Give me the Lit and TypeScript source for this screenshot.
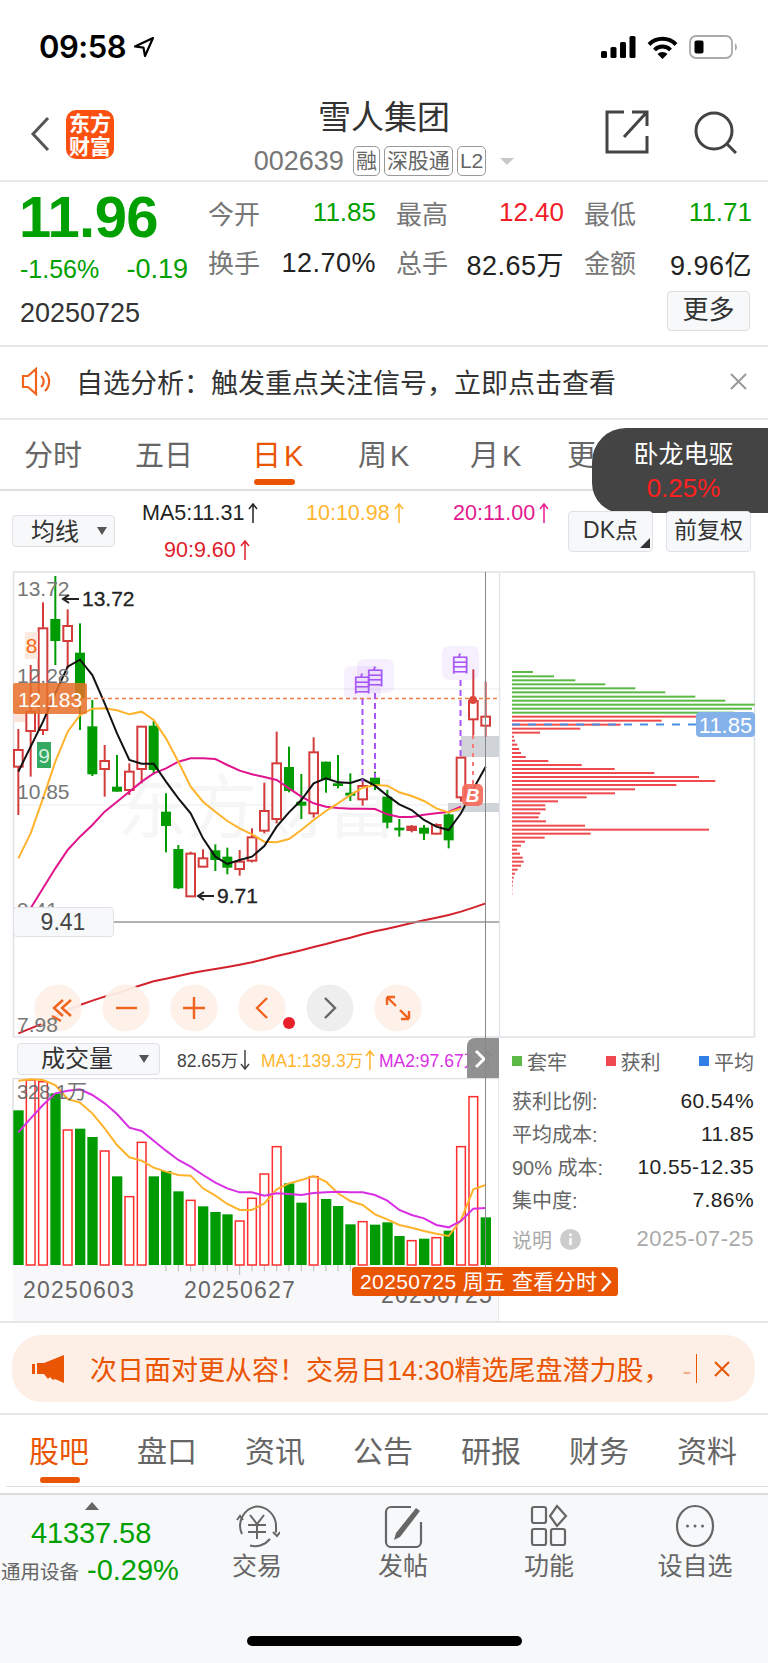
import { LitElement, html, css, svg } from 'lit';
import { customElement } from 'lit/decorators.js';

// x centres of the 39 candles, in 3x chart units
const xs = [55, 92, 129, 166, 203, 240, 277, 314, 351, 388, 425, 461, 498, 535, 572, 609, 646, 682, 719, 756, 793, 830, 867, 904, 941, 978, 1014, 1051, 1088, 1125, 1162, 1198, 1235, 1272, 1309, 1346, 1383, 1420, 1457];

// up, high, low, body top, body bottom
const candles: [number, number, number, number, number][] = [
  [1, 492, 750, 555, 605], [1, 300, 635, 440, 498], [1, 112, 510, 190, 495], [0, 33, 300, 162, 228],
  [1, 133, 310, 183, 228], [0, 175, 495, 263, 400], [0, 405, 633, 484, 628], [1, 540, 695, 588, 612],
  [0, 570, 680, 665, 680], [1, 595, 690, 620, 675], [1, 484, 655, 485, 612], [0, 468, 628, 482, 615],
  [0, 685, 862, 740, 783], [0, 840, 972, 852, 970], [1, 860, 995, 866, 994], [1, 853, 907, 880, 905],
  [0, 838, 918, 856, 885], [0, 848, 928, 875, 908], [1, 855, 932, 890, 912], [1, 790, 892, 817, 887],
  [1, 653, 805, 738, 797], [1, 500, 775, 595, 762], [0, 545, 682, 606, 678], [0, 627, 762, 710, 722],
  [1, 517, 758, 562, 745], [0, 590, 683, 590, 645], [0, 570, 670, 655, 663], [0, 625, 708, 683, 692],
  [1, 645, 722, 663, 703], [0, 620, 675, 638, 660], [0, 675, 790, 695, 773], [0, 762, 815, 788, 796],
  [1, 780, 802, 785, 795], [0, 780, 825, 788, 806], [1, 775, 808, 780, 806], [0, 745, 850, 748, 826],
  [1, 575, 710, 578, 697], [1, 313, 510, 408, 463], [1, 350, 515, 455, 482],
];

const ma5 = [620, 545, 470, 385, 305, 284, 330, 415, 505, 585, 596, 596, 650, 700, 745, 820, 875, 897, 885, 875, 843, 785, 742, 705, 655, 640, 652, 654, 642, 662, 692, 718, 735, 765, 785, 795, 745, 672, 605];
const ma10 = [880, 805, 700, 590, 500, 450, 431, 430, 436, 448, 440, 465, 520, 590, 665, 710, 740, 768, 790, 808, 830, 832, 822, 795, 765, 738, 715, 690, 668, 660, 662, 682, 693, 708, 730, 742, 730];
const ma20 = [1030, 970, 910, 855, 815, 780, 740, 710, 680, 650, 625, 610, 590, 580, 580, 582, 600, 617, 628, 636, 645, 670, 695, 715, 725, 729, 731, 731, 732, 748, 756, 756, 749, 745, 741, 725];
const ma90 = [1405, 1390, 1375, 1355, 1335, 1320, 1307, 1295, 1285, 1272, 1260, 1249, 1241, 1233, 1225, 1218, 1212, 1206, 1199, 1192, 1183, 1173, 1165, 1156, 1146, 1137, 1127, 1118, 1108, 1099, 1091, 1083, 1074, 1066, 1058, 1050, 1040, 1028, 1015];

const volTops = [241, 150, 155, 190, 300, 296, 321, 363, 439, 500, 337, 439, 423, 484, 511, 529, 546, 553, 573, 505, 432, 350, 460, 518, 440, 507, 528, 583, 575, 584, 577, 618, 632, 626, 623, 602, 350, 200, 562];
const volUp = [0, 1, 1, 0, 1, 0, 0, 1, 0, 1, 1, 0, 0, 0, 1, 0, 0, 0, 1, 1, 1, 1, 0, 0, 1, 0, 0, 0, 1, 0, 0, 0, 1, 0, 1, 0, 1, 1, 0];
const volMa1 = [152, 148, 150, 165, 207, 218, 250, 295, 345, 382, 392, 413, 425, 435, 437, 475, 497, 522, 540, 540, 520, 478, 460, 450, 438, 455, 490, 513, 525, 553, 568, 585, 593, 603, 611, 618, 570, 478, 465];
const volMa2 = [307, 265, 225, 190, 182, 178, 195, 220, 252, 293, 303, 332, 362, 390, 410, 435, 458, 475, 487, 487, 497, 490, 492, 495, 489, 487, 485, 487, 487, 495, 512, 540, 555, 565, 585, 592, 573, 536, 534];

// chip distribution: row y, right end
const chipGreen = [[216, 279], [229, 342], [241, 406], [253, 496], [265, 586], [277, 676], [290, 766], [302, 856], [314, 944], [326, 936], [338, 882]];
const chipRed = [[350, 786], [362, 665], [374, 542], [386, 421], [398, 300], [410, 222], [422, 225], [434, 232], [447, 237], [459, 243], [471, 257], [483, 325], [495, 425], [507, 524], [519, 643], [531, 777], [543, 826], [555, 709], [568, 585], [580, 525], [592, 440], [604, 354], [616, 316], [628, 317], [640, 301], [652, 296], [664, 318], [677, 435], [689, 807], [701, 452], [713, 314], [725, 255], [737, 243], [749, 231], [761, 240], [773, 248], [785, 251], [797, 243], [809, 233], [821, 225], [833, 221], [845, 219], [857, 218], [869, 217], [881, 217]];

const line = (ys: number[], start: number) => ys.map((y, i) => `${xs[i + start]},${y}`).join(' ');

const zoomBtns = [
  { x: 58, icon: 'M63 -8l-9 8 9 8M71 -8l-9 8 9 8M52 8l9 5' },
  { x: 126, icon: 'M116 0h21' },
  { x: 194, icon: 'M183 0h22M194 -11v22' },
  { x: 262, icon: 'M267 -10l-10 10 10 10' },
  { x: 330, icon: 'M325 -10l10 10 -10 10', grey: true },
  { x: 398, icon: 'M387 -11h8M387 -11v8M387 -11l9 9M409 11h-8M409 11v-8M409 11l-9 -9' },
];

const arrow = (down = false) => html`<svg class="ar" width="12" height="22" viewBox="0 0 12 22" fill="none" stroke="currentColor" stroke-width="1.5">
  <path d=${down ? 'M6 1v19M2 15l4 5 4 -5' : 'M6 21V2M2 7l4 -5 4 5'}/>
</svg>`;

@customElement('app-root')
export class AppRoot extends LitElement {
  static styles = css`
    :host {
      display: block;
      width: 768px;
      height: 1663px;
      overflow: hidden;
      background: #fff;
      color: #333;
      font-family: 'Liberation Sans', 'Noto Sans CJK SC', sans-serif;
      position: relative;
    }
    svg { display: block; }
    svg text { font-family: 'Liberation Sans', 'Noto Sans CJK SC', sans-serif; }
    svg.ar { display: inline-block; vertical-align: -4px; margin-left: 3px; }

    .status { height: 94px; display: flex; align-items: center; justify-content: space-between; padding: 0 29px 0 39px; }
    .time { display: flex; align-items: center; gap: 8px; font: 600 31px/36px Inter, sans-serif; color: #000; letter-spacing: -0.5px; }
    .status-icons { display: flex; align-items: center; gap: 11px; }

    .nav { height: 86px; display: grid; grid-template-columns: 1fr auto 1fr; border-bottom: 2px solid #e8e8ec; }
    .nav-left { display: flex; align-items: center; gap: 16px; padding: 0 0 6px 30px; }
    .logo { width: 48px; height: 49px; border-radius: 10px; background: #fb5010; color: #fff; font-size: 21px; line-height: 23px; font-weight: 700; text-align: center; padding-top: 2px; box-sizing: border-box; white-space: nowrap; }
    .nav-mid { display: flex; flex-direction: column; align-items: center; padding-top: 4px; }
    .title { font-size: 33px; line-height: 40px; color: #333; }
    .sub { display: flex; align-items: center; gap: 4px; height: 32px; margin-top: 7px; color: #777; font-size: 27px; }
    .tag { height: 30px; box-sizing: border-box; border: 1px solid #999; border-radius: 5px; font-size: 21px; line-height: 28px; padding: 0 2px; color: #666; }
    .sub .code { margin-right: 5px; }
    .caret { width: 0; height: 0; border: 7px solid transparent; border-top: 7px solid #c8c8c8; border-bottom: 0; margin-left: 10px; }
    .nav-right { display: flex; align-items: center; justify-content: flex-end; gap: 45px; padding: 0 31px 10px 0; }

    .quote { height: 165px; box-sizing: border-box; border-bottom: 2px solid #e8e8ec; padding: 7px 15px 0 19px; }
    .quote-top { display: flex; height: 101px; }
    .price-col { width: 189px; color: #00a000; }
    .price { font-size: 58px; line-height: 56px; font-weight: 700; letter-spacing: -0.6px; }
    .change { display: flex; justify-content: space-between; align-items: center; margin: 9px 0 0 1px; height: 30px; font-size: 25px; width: 168px; }
    .change span + span { font-size: 27px; }
    .stats { display: grid; grid-template-columns: repeat(3, 168px); column-gap: 20px; row-gap: 19px; padding-top: 8px; align-content: start; }
    .stat { display: flex; justify-content: space-between; align-items: center; height: 30px; font-size: 26px; color: #222; }
    .stat label { color: #777; font-size: 26px; }
    .stat .wide { font-size: 27px; letter-spacing: .5px; margin-top: 5px; }
    .green { color: #00a000; }
    .red { color: #f01c28; }
    .quote-bottom { display: flex; justify-content: space-between; align-items: flex-start; margin-top: 1px; }
    .date { font-size: 27px; line-height: 40px; margin: 2px 0 0 1px; color: #333; }
    .more { width: 83px; height: 40px; box-sizing: border-box; background: #f7f8fa; border: 1px solid #ddd; border-radius: 4px; font-size: 26px; line-height: 37px; text-align: center; color: #333; margin-right: 3px; }

    .notice { height: 73px; box-sizing: border-box; border-bottom: 2px solid #e8e8ec; display: flex; align-items: center; padding: 0 21px 3px; font-size: 27px; color: #333; }
    .notice span { margin-left: 22px; flex: 1; }

    .ktabs { height: 71px; box-sizing: border-box; border-bottom: 2px solid #dedfe3; padding-left: 24px; display: grid; grid-template-columns: 111px 117px 106px 112px 97px 70px; font-size: 29px; line-height: 72px; color: #666; }
    .ktabs .k { letter-spacing: 3px; }
    .ktabs .on { color: #ea5504; position: relative; }
    .ktabs .on::after { content: ''; position: absolute; left: 2px; width: 41px; height: 6px; top: 59px; border-radius: 3px; background: #ea5504; }
    .bubble { position: absolute; left: 592px; top: 428px; width: 176px; height: 85px; background: #444; border-radius: 34px 0 0 30px; text-align: center; color: #fff; font-size: 25px; line-height: 34px; padding: 9px 0 0 7px; box-sizing: border-box; }
    .bubble div + div { color: #ff2020; font-size: 26px; }

    .toolbar { height: 74px; display: flex; padding: 0 15px 0 12px; }
    .pick { height: 32px; box-sizing: border-box; background: #f7f8fa; border: 1px solid #dfe1e6; border-radius: 4px; color: #333; font-size: 24px; line-height: 29px; display: flex; align-items: center; position: relative; }
    .pick::after { content: ''; position: absolute; border: 5px solid transparent; border-top: 8px solid #555; border-bottom: 0; top: 11px; right: 7px; }
    .toolbar .pick { width: 103px; margin-top: 24px; padding-left: 18px; }
    .mas { width: 426px; margin-left: 27px; font-size: 21.500px; line-height: 37px; padding-top: 4px; }
    .mas-row { display: grid; grid-template-columns: 164px 147px auto; }
    .mas-row.second { padding-left: 22px; }
    .ma-black { color: #222; } .ma-orange { color: #ffb52e; } .ma-pink { color: #e3198f; } .ma-red { color: #e0202a; }
    .tool-btn { height: 41px; width: 85px; box-sizing: border-box; margin-top: 20px; background: #f7f8fa; border: 1px solid #dfe1e6; border-radius: 4px; font-size: 23px; line-height: 37px; text-align: center; color: #333; position: relative; }
    .tool-btn.dk::after { content: ''; position: absolute; right: 2px; bottom: 3px; border-left: 10px solid transparent; border-bottom: 10px solid #333; }
    .tool-btn + .tool-btn { margin-left: 13px; }

    .lower { height: 285px; display: flex; position: relative; border-bottom: 2px solid #e6e6ea; box-sizing: border-box; }
    .vol { width: 499px; flex: none; }
    .vol-head { height: 40px; display: flex; align-items: center; font-size: 17.500px; white-space: nowrap; overflow: hidden; }
    .vol-head .pick { width: 143px; margin: 1px 0 0 17px; font-size: 24px; padding-left: 23px; height: 32px; flex: none; }
    .vol-head .pick::after { right: 10px; }
    .vol-head svg.ar { margin-left: 1px; }
    .vol-labels { display: grid; grid-template-columns: 84px 118px auto; margin-left: 17px; padding-top: 3px; }
    .handle { position: absolute; left: 467px; top: 0; width: 32px; height: 40px; background: #8c8c8c; border-radius: 8px 0 0 0; opacity: .95; }
    .cross { position: absolute; left: 485px; top: 0; width: 1px; height: 232px; background: #888; }
    .stamp { position: absolute; left: 352px; top: 229px; width: 266px; height: 29px; background: #ea5504; border-radius: 3px; color: #fff; font-size: 21px; line-height: 29px; padding-left: 8px; box-sizing: border-box; white-space: nowrap; display: flex; align-items: center; letter-spacing: .4px; }
    .chip { flex: 1; padding: 0 14px 0 13px; font-size: 20px; color: #666; }
    .legend { display: flex; justify-content: space-between; height: 46px; align-items: center; }
    .legend div { display: flex; align-items: center; gap: 5px; }
    .legend i { width: 10px; height: 10px; display: block; }
    .chip-row { display: flex; justify-content: space-between; height: 33px; align-items: center; }
    .chip-row b { font-weight: 400; color: #222; font-size: 21px; letter-spacing: .4px; }
    .chip-note { display: flex; justify-content: space-between; align-items: center; margin-top: 8px; height: 30px; color: #aaa; }
    .chip-note span { display: flex; align-items: center; gap: 8px; }
    .chip-note em { font-style: normal; font-size: 22px; letter-spacing: .5px; }

    .promo { height: 92px; box-sizing: border-box; border-bottom: 2px solid #e8e8ec; padding: 12px 13px 0 12px; }
    .pill { height: 67px; border-radius: 30px; background: #fdeee6; display: flex; align-items: center; padding: 0 25px 0 20px; color: #ea5504; font-size: 27px; white-space: nowrap; }
    .pill .msg { margin-left: 26px; flex: 1; }
    .pill .msg i { font-style: normal; opacity: .4; margin-left: 12px; }
    .pill .bar { width: 1px; height: 29px; background: #ea5504; margin-right: 17px; }

    .btabs { height: 72px; box-sizing: border-box; border-bottom: 1px solid #e0e0e4; margin-left: 6px; padding-left: 23px; display: grid; grid-template-columns: repeat(7, 108px); font-size: 30px; line-height: 74px; color: #666; }
    .btabs .on { color: #ea5504; position: relative; }
    .btabs .on::after { content: ''; position: absolute; left: 11px; top: 62px; width: 40px; height: 6px; border-radius: 3px; background: #ea5504; }

    .footer { position: absolute; left: 0; right: 0; top: 1493px; bottom: 0; background: #f7f8fa; border-top: 2px solid #dcdde1; display: flex; box-sizing: border-box; }
    .index { width: 184px; flex: none; position: relative; color: #00a000; }
    .index .up { width: 0; height: 0; border: 7px solid transparent; border-bottom: 8px solid #666; border-top: 0; margin: 7px 0 0 85px; }
    .index .num { font-size: 29px; line-height: 36px; margin: 5px 0 0 31px; letter-spacing: -.1px; }
    .index .line { display: flex; align-items: center; margin: 2px 0 0 1px; height: 34px; gap: 8px; font-size: 29px; white-space: nowrap; }
    .index small { font-size: 19.500px; color: #666; }
    .fbtn { width: 146px; display: flex; flex-direction: column; align-items: center; padding-top: 9px; box-sizing: border-box; color: #666; font-size: 25px; line-height: 28px; gap: 4px; }
    .home { position: absolute; left: 247px; top: 1636px; width: 275px; height: 10px; border-radius: 5px; background: #000; }
  `;

  private kline() {
    return svg`
      <svg width="768" height="473" viewBox="0 0 768 473">
        <rect x="13.5" y="7" width="741" height="465" fill="#fff" stroke="#dfe1e6" stroke-width="1.5"/>
        <line x1="499.5" y1="7" x2="499.5" y2="472" stroke="#e4e5e9" stroke-width="1.5"/>
        <line x1="13" y1="124" x2="499" y2="124" stroke="#e9ecf1"/>
        <line x1="13" y1="240" x2="499" y2="240" stroke="#e9ecf1"/>
        <text x="117" y="268" font-size="70" fill="#f6f6f6">东方财富</text>
        <rect x="461" y="171" width="38" height="21" fill="#d0d3d8"/>
        <rect x="448" y="238" width="51" height="9" fill="#d0d3d8"/>
        <rect x="14" y="135" width="11" height="22" fill="#fde4da"/>
        <g transform="scale(0.33333)">
          ${candles.map((c, i) => {
            const col = c[0] ? '#d43c3c' : '#009b00';
            return svg`
              <line x1=${xs[i]} y1=${c[1]} x2=${xs[i]} y2=${c[2]} stroke=${col} stroke-width="6"/>
              <rect x=${xs[i] - (c[0] ? 13 : 15)} y=${c[3]} width=${c[0] ? 26 : 30} height=${c[4] - c[3]}
                fill=${c[0] && i !== 32 ? '#fff' : col} stroke=${c[0] ? col : 'none'} stroke-width="6"/>`;
          })}
          <polyline points=${line(ma90, 0)} fill="none" stroke="#d3222c" stroke-width="6"/>
          <polyline points=${line(ma20, 1)} fill="none" stroke="#e0148c" stroke-width="6"/>
          <polyline points=${line(ma10, 0)} fill="none" stroke="#ffb32c" stroke-width="6"/>
          <polyline points=${line(ma5, 0)} fill="none" stroke="#111" stroke-width="6"/>
        </g>
        <text x="17" y="31" font-size="21" fill="#777">13.72</text>
        <text x="17" y="118" font-size="21" fill="#777">12.28</text>
        <text x="17" y="234" font-size="21" fill="#777">10.85</text>
        <text x="17" y="352" font-size="21" fill="#777">9.41</text>
        <rect x="25" y="67" width="13" height="27" fill="#fde9df"/>
        <text x="31.5" y="88" font-size="21" fill="#f56a16" text-anchor="middle">8</text>
        <rect x="37" y="177" width="14" height="26" fill="#35a862"/>
        <text x="44" y="198" font-size="21" fill="#d6f2e0" text-anchor="middle">9</text>
        <path d="M79 34H63m6 -4l-6 4 6 4" fill="none" stroke="#222" stroke-width="2"/>
        <text x="82" y="41" font-size="21" fill="#222" stroke="#222" stroke-width=".3">13.72</text>
        <path d="M214 331H198m6 -4l-6 4 6 4" fill="none" stroke="#222" stroke-width="2"/>
        <text x="217" y="338" font-size="21" fill="#222" stroke="#222" stroke-width=".3">9.71</text>
        <line x1="87" y1="133.5" x2="499" y2="133.5" stroke="#f2803e" stroke-width="1.5" stroke-dasharray="4 3"/>
        <rect x="13" y="118" width="74" height="31" rx="2" fill="#e8702a" opacity=".86"/>
        <text x="50" y="142" font-size="21" fill="#fff" text-anchor="middle">12.183</text>

        <line x1="362.5" y1="134" x2="362.5" y2="217" stroke="#a855f7" stroke-width="2" stroke-dasharray="6 4"/>
        <line x1="375" y1="128" x2="375" y2="213" stroke="#a855f7" stroke-width="2" stroke-dasharray="6 4"/>
        <line x1="460.5" y1="115" x2="460.5" y2="192" stroke="#a855f7" stroke-width="2" stroke-dasharray="6 4"/>
        <line x1="473" y1="170" x2="473" y2="220" stroke="#f77" stroke-width="2" stroke-dasharray="4 5"/>
        ${[[344, 101], [357, 94], [442, 81]].map(([x, y]) => svg`
          <rect x=${x} y=${y} width="37" height="34" rx="7" fill="#ab63f5" opacity=".1"/>
          <text x=${x + 18} y=${y + 25} font-size="21" fill="#a855f7" text-anchor="middle">自</text>`)}
        <circle cx="473" cy="135" r="4" fill="#e0483c"/>
        <rect x="462" y="219" width="21" height="22" rx="5" fill="#f56a5a" opacity=".92"/>
        <text x="472.5" y="237" font-size="19" font-weight="700" font-style="italic" fill="#fff" text-anchor="middle">B</text>

        <g transform="translate(440 35) scale(0.33333)">
          ${chipGreen.map(([y, w]) => svg`<rect x="216" y=${y - 3} width=${w - 216} height="6" fill="#5bb945"/>`)}
          ${chipRed.map(([y, w]) => svg`<rect x="216" y=${y - 3} width=${w - 216} height="6" fill="#ee4a4f"/>`)}
        </g>
        <line x1="512" y1="159.5" x2="697" y2="159.5" stroke="#4a90e2" stroke-width="2" stroke-dasharray="8 8"/>
        <rect x="696" y="147" width="59" height="25" rx="4" fill="#85b1ea"/>
        <text x="725.5" y="167.5" font-size="22" fill="#fff" text-anchor="middle">11.85</text>

        <line x1="114" y1="357" x2="499" y2="357" stroke="#999" stroke-width="1.5"/>
        <line x1="485.5" y1="7" x2="485.5" y2="473" stroke="#888"/>
        <rect x="13.5" y="342.5" width="100" height="29" rx="3" fill="#f7f8fa" stroke="#dfe1e6"/>
        <text x="63" y="365" font-size="23" fill="#444" text-anchor="middle">9.41</text>

        ${zoomBtns.map((b) => svg`
          <circle cx=${b.x} cy="443" r="23.5" fill=${b.grey ? '#ededed' : '#fdf0e8'} opacity=".94"/>
          <path transform="translate(0 443)" d=${b.icon} fill="none" stroke=${b.grey ? '#666' : '#f0641e'} stroke-width="2.4"/>`)}
        <circle cx="289" cy="458" r="6" fill="#e8202a"/>
        <text x="17" y="467" font-size="21" fill="#777">7.98</text>
      </svg>`;
  }

  private volume() {
    return svg`
      <svg width="499" height="243" viewBox="0 0 499 243">
        <rect x="13" y="187" width="486" height="56" fill="#f8f8fb"/>
        <line x1="13" y1="0.5" x2="499" y2="0.5" stroke="#dfe1e6" stroke-width="1.5"/>
        <line x1="13" y1="0" x2="13" y2="187" stroke="#dfe1e6" stroke-width="1.5"/>
        <line x1="499" y1="0" x2="499" y2="243" stroke="#e4e5e9" stroke-width="1.5"/>
        <g transform="translate(0 -48) scale(0.33333)">
          ${xs.map((x, i) => {
            if (i >= 12 && i <= 27) {
              return svg`<line x1=${x} y1="705" x2=${x} y2=${x === 719 ? 735 : 724} stroke="#bbb" stroke-width="3"/>`;
            }
            return '';
          })}
          ${xs.map((x, i) => volUp[i]
            ? svg`<rect x=${x - 13} y=${volTops[i]} width="26" height=${705 - volTops[i]} fill="#fff" stroke="#ff2d2d" stroke-width="4.5"/>`
            : svg`<rect x=${x - 15} y=${volTops[i]} width="31" height=${705 - volTops[i]} fill="#009b00"/>`)}
          <polyline points=${line(volMa1, 0)} fill="none" stroke="#ffb32c" stroke-width="6"/>
          <polyline points=${line(volMa2, 0)} fill="none" stroke="#d92fe3" stroke-width="6"/>
        </g>
        <text x="17" y="21" font-size="20" fill="#666" opacity=".9">328.1万</text>
        <g font-size="23" fill="#666" letter-spacing="1.2">
          <text x="23" y="220">20250603</text>
          <text x="184" y="220">20250627</text>
          <text x="381" y="225">20250725</text>
        </g>
      </svg>`;
  }

  render() {
    return html`
      <div class="status">
        <div class="time">
          09:58
          <svg width="20" height="20" viewBox="0 0 20 20"><path d="M19 1L1 9.5l8.5 1.2L11 19z" fill="none" stroke="#000" stroke-width="2.2" stroke-linejoin="round"/></svg>
        </div>
        <div class="status-icons">
          <svg width="35" height="22" viewBox="0 0 35 22" fill="#000">
            <rect x="0" y="15" width="6" height="7" rx="1.5"/><rect x="9.500" y="11" width="6" height="11" rx="1.5"/>
            <rect x="19" y="6" width="6" height="16" rx="1.5"/><rect x="28.500" y="0" width="6" height="22" rx="1.5"/>
          </svg>
          <svg width="31" height="23" viewBox="0 0 31 23" fill="none" stroke="#000" stroke-width="4">
            <path d="M2 8.500a19 19 0 0 1 27 0M7.500 14a11 11 0 0 1 16 0"/><path d="M15.500 23l-5 -5a7 7 0 0 1 10 0z" fill="#000" stroke="none"/>
          </svg>
          <svg width="50" height="24" viewBox="0 0 50 24">
            <rect x="1" y="1" width="42" height="22" rx="6" fill="none" stroke="#aaa" stroke-width="1.8"/>
            <rect x="5.500" y="5.500" width="9" height="13" rx="2" fill="#000"/>
            <path d="M46 8a5 5 0 0 1 0 8z" fill="#aaa"/>
          </svg>
        </div>
      </div>

      <div class="nav">
        <div class="nav-left">
          <svg width="20" height="36" viewBox="0 0 20 36"><path d="M18 2L3 18l15 16" fill="none" stroke="#555" stroke-width="3"/></svg>
          <div class="logo">东方<br />财富</div>
        </div>
        <div class="nav-mid">
          <div class="title">雪人集团</div>
          <div class="sub">
            <span class="code">002639</span><span class="tag">融</span><span class="tag">深股通</span><span class="tag">L2</span><i class="caret"></i>
          </div>
        </div>
        <div class="nav-right">
          <svg width="44" height="44" viewBox="0 0 44 44" fill="none" stroke="#444" stroke-width="3">
            <path d="M19 2H2v40h40V26M19 27L41 3M27 2h15v14"/>
          </svg>
          <svg width="43" height="43" viewBox="0 0 43 43" fill="none" stroke="#444" stroke-width="3">
            <circle cx="20" cy="20" r="18"/><path d="M33 33l9 9"/>
          </svg>
        </div>
      </div>

      <div class="quote">
        <div class="quote-top">
          <div class="price-col">
            <div class="price">11.96</div>
            <div class="change"><span>-1.56%</span><span>-0.19</span></div>
          </div>
          <div class="stats">
            <div class="stat"><label>今开</label><span class="green">11.85</span></div>
            <div class="stat"><label>最高</label><span class="red">12.40</span></div>
            <div class="stat"><label>最低</label><span class="green">11.71</span></div>
            <div class="stat"><label>换手</label><span class="wide">12.70%</span></div>
            <div class="stat"><label>总手</label><span class="wide">82.65万</span></div>
            <div class="stat"><label>金额</label><span class="wide">9.96亿</span></div>
          </div>
        </div>
        <div class="quote-bottom">
          <div class="date">20250725</div>
          <div class="more">更多</div>
        </div>
      </div>

      <div class="notice">
        <svg width="33" height="29" viewBox="0 0 33 29" fill="none" stroke="#f0641e" stroke-width="2.2">
          <path d="M2 9h5l8 -7v25l-8 -7H2zM20 9a7 7 0 0 1 0 11M24 5a13 13 0 0 1 0 19"/>
        </svg>
        <span>自选分析：触发重点关注信号，立即点击查看</span>
        <svg width="17" height="17" viewBox="0 0 17 17" stroke="#999" stroke-width="2"><path d="M1 1l15 15M16 1L1 16"/></svg>
      </div>

      <div class="ktabs">
        <div>分时</div><div>五日</div><div class="on k">日K</div><div class="k">周K</div><div class="k">月K</div><div>更多</div>
      </div>
      <div class="bubble"><div>卧龙电驱</div><div>0.25%</div></div>

      <div class="toolbar">
        <div class="pick">均线</div>
        <div class="mas">
          <div class="mas-row">
            <span class="ma-black">MA5:11.31${arrow()}</span><span class="ma-orange">10:10.98${arrow()}</span><span class="ma-pink">20:11.00${arrow()}</span>
          </div>
          <div class="mas-row second"><span class="ma-red">90:9.60${arrow()}</span></div>
        </div>
        <div class="tool-btn dk">DK点</div>
        <div class="tool-btn">前复权</div>
      </div>

      ${this.kline()}

      <div class="lower">
        <div class="vol">
          <div class="vol-head">
            <div class="pick">成交量</div>
            <div class="vol-labels">
              <span style="color:#444">82.65万${arrow(true)}</span><span class="ma-orange">MA1:139.3万${arrow()}</span><span style="color:#d92fe3">MA2:97.67万${arrow()}</span>
            </div>
          </div>
          ${this.volume()}
        </div>
        <div class="chip">
          <div class="legend">
            <div><i style="background:#5bb945"></i>套牢</div>
            <div><i style="background:#ee4a4f"></i>获利</div>
            <div><i style="background:#2f7fe6"></i>平均</div>
          </div>
          <div class="chip-row"><span>获利比例:</span><b>60.54%</b></div>
          <div class="chip-row"><span>平均成本:</span><b>11.85</b></div>
          <div class="chip-row"><span>90% 成本:</span><b>10.55-12.35</b></div>
          <div class="chip-row"><span>集中度:</span><b>7.86%</b></div>
          <div class="chip-note">
            <span>说明
              <svg width="21" height="21" viewBox="0 0 21 21"><circle cx="10.500" cy="10.500" r="10.500" fill="#ccc"/><path d="M10.500 9v7M10.500 4.500v2.500" stroke="#fff" stroke-width="2.500"/></svg>
            </span>
            <em>2025-07-25</em>
          </div>
        </div>
        <div class="handle">
          <svg width="32" height="40" viewBox="0 0 32 40"><path d="M9 13l8 8 -8 8" fill="none" stroke="#fff" stroke-width="3"/></svg>
        </div>
        <div class="cross"></div>
        <div class="stamp">
          20250725 周五 查看分时
          <svg width="12" height="22" viewBox="0 0 12 22" style="margin-left:2px"><path d="M2 2l8 9 -8 9" fill="none" stroke="#fff" stroke-width="2.400"/></svg>
        </div>
      </div>

      <div class="promo">
        <div class="pill">
          <svg width="32" height="28" viewBox="0 0 32 28" fill="#ea5504">
            <rect x="0" y="9" width="3" height="10"/><path d="M5 8h7L32 0v28l-9 -4v0l-2 1 -3 -3 -2 2 -4 -5H5z"/>
          </svg>
          <div class="msg">次日面对更从容！交易日14:30精选尾盘潜力股，<i>-</i></div>
          <div class="bar"></div>
          <svg width="16" height="16" viewBox="0 0 16 16" stroke="#ea5504" stroke-width="2"><path d="M1 1l14 14M15 1L1 15"/></svg>
        </div>
      </div>

      <div class="btabs">
        <div class="on">股吧</div><div>盘口</div><div>资讯</div><div>公告</div><div>研报</div><div>财务</div><div>资料</div>
      </div>

      <div class="footer">
        <div class="index">
          <div class="up"></div>
          <div class="num">41337.58</div>
          <div class="line"><small>通用设备</small><span>-0.29%</span></div>
        </div>
        <div class="fbtn">
          <svg width="46" height="44" viewBox="0 0 46 44" fill="none" stroke="#666" stroke-width="2">
            <path d="M8 30A19.500 19.500 0 0 1 22 2.500a19.500 19.500 0 0 1 20 19v7M16 41.500A19.500 19.500 0 0 0 36 35"/>
            <path d="M3 16l3 -4 3 4M39 28l4 4 3 -4" stroke-width="2"/>
            <path d="M16 11l7 9 7 -9M14 21h18M14 28h18M23 20v15"/>
          </svg>
          交易
        </div>
        <div class="fbtn">
          <svg width="40" height="44" viewBox="0 0 40 44" fill="none" stroke="#666" stroke-width="2.200">
            <path d="M28 3H8a5 5 0 0 0 -5 5v30a5 5 0 0 0 5 5h25a5 5 0 0 0 5 -5V18"/>
            <path d="M13 29L33 4l4 3L17 33l-6 3z" fill="#666" stroke="none"/>
          </svg>
          发帖
        </div>
        <div class="fbtn">
          <svg width="38" height="44" viewBox="0 0 38 44" fill="none" stroke="#666" stroke-width="2.200">
            <rect x="2" y="3" width="14" height="16" rx="2"/><path d="M27 2l9 10 -9 10 -7 -10z"/>
            <rect x="2" y="25" width="14" height="16" rx="2"/><rect x="21" y="25" width="14" height="16" rx="2"/>
          </svg>
          功能
        </div>
        <div class="fbtn">
          <svg width="40" height="44" viewBox="0 0 40 44" fill="none" stroke="#666" stroke-width="2.200">
            <ellipse cx="20" cy="22" rx="18" ry="20"/>
            <circle cx="12.500" cy="22" r="1.500" fill="#666" stroke="none"/><circle cx="20" cy="22" r="1.500" fill="#666" stroke="none"/><circle cx="27.500" cy="22" r="1.500" fill="#666" stroke="none"/>
          </svg>
          设自选
        </div>
      </div>
      <div class="home"></div>
    `;
  }
}
